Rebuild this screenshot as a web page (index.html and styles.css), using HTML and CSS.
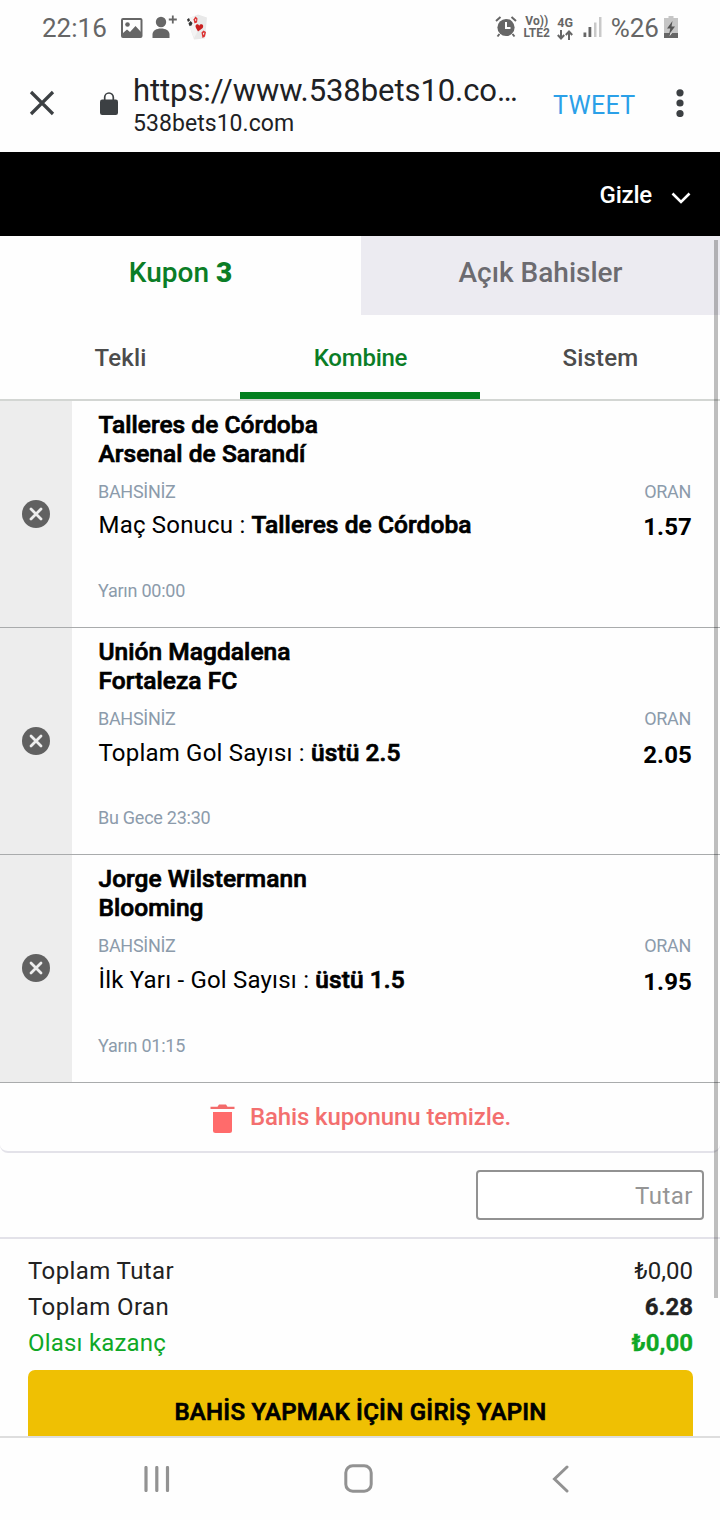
FILE: index.html
```html
<!DOCTYPE html>
<html lang="tr">
  <head>
    <meta charset="UTF-8" />
    <meta name="viewport" content="width=device-width, initial-scale=1.0">
    <title>538bets10.com</title>
    <link rel="stylesheet" href="styles.css">
  </head>
  <body>
    <header class="status-bar">
      <span class="clock">22:16</span>
      <svg class="icon-image" width="22" height="20" viewBox="0 0 22 20">
        <rect x="1" y="1" width="19.5" height="18" rx="1" fill="none" stroke="#666" stroke-width="2" />
        <circle cx="6.5" cy="6.5" r="2.3" fill="#666" />
        <path d="M2 15l4-3.5 3 2.5 5.5-6L20 14v5H2z" fill="#666" />
      </svg>
      <svg class="icon-person" width="26" height="24" viewBox="0 0 26 24">
        <circle cx="9" cy="7" r="5.2" fill="#666" />
        <path d="M0.5 23v-3.500c0-4 4-6 8.500-6s8.500 2 8.500 6V23z" fill="#666" />
        <path d="M20.800 0.500v8M16.800 4.500h8" stroke="#666" stroke-width="1.800" />
      </svg>
      <svg class="icon-cards" width="23" height="26" viewBox="0 0 23 26">
        <path d="M1 5l11-4.500 9 3-2 21-11 1z" fill="#e9e9e9" />
        <path d="M1 5l7-3 5 13-5 9z" fill="#f3f3f3" />
        <path d="M1 5.500l2-1.500 1 2.500-2 1.500z" fill="#333" />
        <path d="M2.500 9.500L4.500 7l2 2-1 2.500-2 .5z" fill="#333" />
        <path d="M7.500 5.500l2-3 2 2-.5 4-2.500 1z" fill="#d33" />
        <path d="M9 5.500l1-.8.3 1.800-.9.500z" fill="#f3f3f3" />
        <path d="M12 17.500l-2-3.500c-1.800-3.500 1.800-5 3.200-2.300 1.600-2.700 5.300-1 3.500 2.300z" fill="#c91f1f" />
        <path d="M15.500 18.500l2-2 2.500 1.500-1 4.500-2.500 1.500z" fill="#d33" />
        <path d="M17 19l1.300-.5-.3 2-1 .3z" fill="#e9e9e9" />
      </svg>
      <div class="status-right">
        <svg class="icon-alarm" width="22" height="22" viewBox="0 0 22 22">
          <circle cx="11" cy="11.500" r="8.600" fill="#666" />
          <path d="M1 5l4.500-4M21 5l-4.500-4M4.500 18l-2 2.500M17.500 18l2 2.500" stroke="#666" stroke-width="2" />
          <path d="M11 6v6h4.500" fill="none" stroke="#fff" stroke-width="2" />
        </svg>
        <span class="network volte"><span>Vo))</span><span>LTE2</span></span>
        <span class="network">4G
          <svg width="16" height="10" viewBox="0 0 16 10">
            <path d="M4 0v8M0.800 5L4 8.500 7.200 5M12 10V2M8.800 5L12 1.500 15.200 5" fill="none" stroke="#666" stroke-width="2" />
          </svg>
        </span>
        <svg class="icon-signal" width="19" height="20" viewBox="0 0 19 20">
          <path d="M0.500 15.500h2.800V20H0.500zM5.500 10h2.800v10H5.500z" fill="#666" />
          <path d="M11 5.500h2.500V20H11zM16 0h2.500v20H16z" fill="#c9c9c9" />
        </svg>
        <span class="battery-level">%26</span>
        <svg class="icon-battery" width="14" height="22" viewBox="0 0 14 22">
          <path d="M4.500 0h5v2H14v20H0V2h4.500z" fill="#c6c6c6" />
          <path d="M0 17h14v5H0z" fill="#666" />
          <path d="M8.500 5L3 12.500h3.300L5 18.500l6-8H7.500z" fill="#555" />
          <path d="M6.500 17h1.500l-2.500 3.300z" fill="#fff" />
        </svg>
      </div>
    </header>

    <div class="browser-bar">
      <svg class="icon-close" width="26" height="26" viewBox="0 0 26 26">
        <path d="M2 2l22 22M24 2L2 24" stroke="#3c4043" stroke-width="3.200" />
      </svg>
      <svg class="icon-lock" width="18" height="23" viewBox="0 0 18 23">
        <rect x="0" y="7.500" width="18" height="15.500" rx="2.200" fill="#3c4043" />
        <path d="M4.700 8V5.300a4.300 4.300 0 0 1 8.600 0V8" fill="none" stroke="#3c4043" stroke-width="1.700" />
      </svg>
      <div class="address">
        <div class="address-url">https://www.538bets10.co…</div>
        <div class="address-host">538bets10.com</div>
      </div>
      <span class="tweet">TWEET</span>
      <svg class="icon-more" width="8" height="28" viewBox="0 0 8 28">
        <g fill="#3c4043">
          <circle cx="4" cy="3.800" r="3.600" />
          <circle cx="4" cy="14" r="3.600" />
          <circle cx="4" cy="24.500" r="3.600" />
        </g>
      </svg>
    </div>

    <main class="betslip">
      <div class="hide-bar">
        <span>Gizle</span>
        <svg width="20" height="12" viewBox="0 0 20 12">
          <path d="M1.500 1.500L10 10l8.500-8.500" fill="none" stroke="#fff" stroke-width="2.600" />
        </svg>
      </div>

      <nav class="tabs">
        <a class="tab active">Kupon <b>3</b></a>
        <a class="tab">Açık Bahisler</a>
      </nav>

      <nav class="bet-types">
        <a class="bet-type">Tekli</a>
        <a class="bet-type active">Kombine</a>
        <a class="bet-type">Sistem</a>
      </nav>

      <section class="bets">
        <article class="bet">
          <div class="bet-remove">
            <svg width="28" height="28" viewBox="0 0 28 28">
              <circle cx="14" cy="14" r="14" fill="#616161" />
              <path d="M9 9l10 10M19 9L9 19" stroke="#eee" stroke-width="2.800" stroke-linecap="round" />
            </svg>
          </div>
          <div class="bet-info">
            <h3 class="teams">Talleres de Córdoba<br>Arsenal de Sarandí</h3>
            <div class="labels"><span>BAHSİNİZ</span><span>ORAN</span></div>
            <div class="pick"><p>Maç Sonucu : <b>Talleres de Córdoba</b></p><strong>1.57</strong></div>
            <div class="bet-time">Yarın 00:00</div>
          </div>
        </article>
        <article class="bet">
          <div class="bet-remove">
            <svg width="28" height="28" viewBox="0 0 28 28">
              <circle cx="14" cy="14" r="14" fill="#616161" />
              <path d="M9 9l10 10M19 9L9 19" stroke="#eee" stroke-width="2.800" stroke-linecap="round" />
            </svg>
          </div>
          <div class="bet-info">
            <h3 class="teams">Unión Magdalena<br>Fortaleza FC</h3>
            <div class="labels"><span>BAHSİNİZ</span><span>ORAN</span></div>
            <div class="pick"><p>Toplam Gol Sayısı : <b>üstü 2.5</b></p><strong>2.05</strong></div>
            <div class="bet-time">Bu Gece 23:30</div>
          </div>
        </article>
        <article class="bet">
          <div class="bet-remove">
            <svg width="28" height="28" viewBox="0 0 28 28">
              <circle cx="14" cy="14" r="14" fill="#616161" />
              <path d="M9 9l10 10M19 9L9 19" stroke="#eee" stroke-width="2.800" stroke-linecap="round" />
            </svg>
          </div>
          <div class="bet-info">
            <h3 class="teams">Jorge Wilstermann<br>Blooming</h3>
            <div class="labels"><span>BAHSİNİZ</span><span>ORAN</span></div>
            <div class="pick"><p>İlk Yarı - Gol Sayısı : <b>üstü 1.5</b></p><strong>1.95</strong></div>
            <div class="bet-time">Yarın 01:15</div>
          </div>
        </article>
      </section>

      <div class="clear-slip">
        <svg width="25" height="29" viewBox="0 0 25 29">
          <path d="M0.500 2.700h7L9 0.600h7l1.500 2.100h7v2.300h-24z" fill="#f36b6b" />
          <path d="M3 8h19v18.500a2.500 2.500 0 0 1-2.500 2.500h-14A2.500 2.500 0 0 1 3 26.500z" fill="#ff6b6b" />
        </svg>
        <span>Bahis kuponunu temizle.</span>
      </div>

      <div class="stake">
        <input class="stake-input" type="text" placeholder="Tutar">
      </div>

      <div class="totals">
        <div class="total"><span>Toplam Tutar</span><span class="amount">₺0,00</span></div>
        <div class="total"><span>Toplam Oran</span><b>6.28</b></div>
        <div class="total winnings"><span>Olası kazanç</span><b class="amount">₺0,00</b></div>
        <button class="login-button">BAHİS YAPMAK İÇİN GİRİŞ YAPIN</button>
      </div>

      <div class="scrollbar"></div>
    </main>

    <footer class="nav-bar">
      <svg class="nav-recents" width="26" height="26" viewBox="0 0 26 26">
        <path d="M2 1.500v23M12.800 1.500v23M23.500 1.500v23" stroke="#929292" stroke-width="3.200" stroke-linecap="round" />
      </svg>
      <svg class="nav-home" width="29" height="29" viewBox="0 0 29 29">
        <rect x="1.800" y="1.800" width="25.400" height="25.400" rx="7" fill="none" stroke="#929292" stroke-width="3" />
      </svg>
      <svg class="nav-back" width="17" height="28" viewBox="0 0 17 28">
        <path d="M15 2L2.500 14 15 26" fill="none" stroke="#929292" stroke-width="3" stroke-linecap="round" />
      </svg>
    </footer>
  </body>
</html>
```
FILE: styles.css
```css
* {
  box-sizing: border-box;
}

body {
  width: 720px;
  height: 1520px;
  margin: 0;
  overflow: hidden;
  display: flex;
  flex-direction: column;
  font-family: Roboto, 'Noto Sans', sans-serif;
  font-size: 24px;
  color: #000;
  background: #fefefe;
}

svg {
  display: block;
  flex: none;
}

/* Phone status bar */
.status-bar {
  display: flex;
  align-items: center;
  height: 56px;
  padding: 0 41px 0 42px;
  color: #666;
}

.clock {
  width: 79px;
  font-size: 26px;
}

.icon-person {
  margin: -3px 0 0 9px;
}

.icon-cards {
  margin: -2px 0 0 8px;
}

.status-right {
  display: flex;
  align-items: center;
  margin-left: auto;
}

.icon-alarm {
  margin-top: -3px;
}

.network {
  width: 17px;
  margin-left: 6px;
  font-size: 12.500px;
  line-height: 12px;
  font-weight: 700;
  text-align: center;
  white-space: nowrap;
}

.network svg {
  margin-top: 1px;
}

.volte {
  display: flex;
  flex-direction: column;
  align-items: center;
  width: 28px;
  margin: -2px 0 0 6px;
  font-size: 12px;
}

.icon-signal {
  margin: -2px 0 0 9px;
}

.battery-level {
  margin-left: 9px;
  font-size: 26px;
}

.icon-battery {
  margin: -3px 1px 0 5px;
}

/* Browser toolbar */
.browser-bar {
  display: flex;
  height: 96px;
  padding: 0 36px 0 29px;
}

.icon-close {
  margin-top: 34px;
}

.icon-lock {
  margin: 36px 0 0 45px;
}

.address {
  width: 435px;
  padding: 16px 0 0 15px;
  color: #202124;
  white-space: nowrap;
}

.address-url {
  font-size: 31px;
  line-height: 38px;
  letter-spacing: -0.080px;
}

.address-host {
  font-size: 23px;
  line-height: 28px;
  letter-spacing: 0.050px;
}

.tweet {
  width: 123px;
  margin-top: 35px;
  font-size: 25px;
  line-height: 30px;
  letter-spacing: 0.350px;
  color: #2ba0e8;
}

.icon-more {
  margin-top: 33px;
}

/* Betslip */
.betslip {
  position: relative;
  height: 1284px;
  overflow: hidden;
}

.hide-bar {
  display: flex;
  align-items: center;
  justify-content: flex-end;
  gap: 19px;
  height: 84px;
  padding: 2px 29px 0 0;
  font-weight: 500;
  letter-spacing: -0.200px;
  color: #fff;
  background: #000;
}

.hide-bar svg {
  margin-top: 6px;
}

.tabs {
  display: flex;
  height: 79px;
  font-size: 28px;
  font-weight: 500;
  line-height: 73px;
  text-align: center;
}

.tab {
  width: 359px;
  color: #6c6b70;
  background: #ecebf1;
}

.tab.active {
  width: 361px;
  color: #0b7d26;
  background: none;
}

.tab b {
  font-weight: 900;
}

.bet-types {
  display: flex;
  height: 85.670px;
  border-bottom: 2px solid #d3d6d3;
  font-weight: 500;
  line-height: 87px;
  text-align: center;
}

.bet-type {
  width: 240px;
  padding-left: 1px;
  letter-spacing: 0.200px;
  color: #4c4c4c;
}

.bet-type.active {
  border-bottom: 7px solid #048020;
  letter-spacing: -0.250px;
  color: #0b7d26;
}

.bet {
  display: flex;
  height: 227.330px;
  border-bottom: 1px solid #a9abac;
}

.bet-remove {
  display: flex;
  align-items: center;
  justify-content: center;
  width: 72px;
  background: #ededed;
}

.bet-info {
  flex: 1;
  padding: 9px 28px 0 26px;
}

.teams {
  margin: 0;
  padding-left: 0.500px;
  font-size: 24.500px;
  font-weight: 500;
  line-height: 29px;
  letter-spacing: 0.050px;
}

/* thickened medium, tighter than the real bold */
.teams,
.pick b,
.login-button {
  -webkit-text-stroke: 0.700px #000;
}

.labels {
  display: flex;
  justify-content: space-between;
  margin: 13px 1px 0 0;
  font-size: 18px;
  line-height: 22px;
  letter-spacing: -0.300px;
  color: #8c9bab;
}

.pick {
  display: flex;
  justify-content: space-between;
  margin-top: 8.700px;
  line-height: 29px;
}

.pick p {
  margin: 0;
  padding-left: 0.500px;
  letter-spacing: 0.200px;
}

.pick b {
  font-size: 24.500px;
  font-weight: 500;
  line-height: 1;
  letter-spacing: 0.080px;
}

.pick strong {
  padding-top: 2px;
  letter-spacing: 0.150px;
}

.bet-time {
  margin-top: 37.700px;
  font-size: 18px;
  line-height: 22px;
  letter-spacing: -0.250px;
  color: #8c9bab;
}

.clear-slip {
  display: flex;
  align-items: center;
  justify-content: center;
  gap: 15px;
  height: 70px;
  padding-left: 1px;
  border-bottom: 2px solid #e3e2e9;
  border-radius: 0 0 8px 8px;
  font-weight: 500;
  letter-spacing: -0.120px;
  color: #f36f6f;
}

.clear-slip svg {
  margin-top: 3px;
}

.stake {
  display: flex;
  justify-content: flex-end;
  height: 86px;
  padding: 17px 16px 0;
  border-bottom: 2px solid #e3e2e9;
}

.stake-input {
  width: 228px;
  height: 50px;
  padding: 2px 9px 0;
  border: 2px solid #929292;
  border-radius: 4px;
  font: 24px Roboto, sans-serif;
  letter-spacing: 0.500px;
  text-align: right;
  background: #fff;
}

.stake-input::placeholder {
  color: #959595;
}

.totals {
  padding: 14px 27px 0 28px;
  color: #222;
}

.total {
  display: flex;
  justify-content: space-between;
  line-height: 36px;
}

.total span:first-child {
  letter-spacing: 0.400px;
}

.total.winnings {
  color: #0fa826;
}

.total.winnings span:first-child {
  letter-spacing: 0.200px;
}

.total b {
  -webkit-text-stroke: 0.300px currentColor;
}

.login-button {
  display: block;
  width: 100%;
  height: 84px;
  margin-top: 9px;
  padding: 0;
  border: none;
  border-radius: 7px;
  font: 500 24px Roboto, sans-serif;
  letter-spacing: 0.270px;
  color: #000;
  background: #efc003;
}

/* Overlay scrollbar */
.scrollbar {
  position: absolute;
  top: 88px;
  right: 2px;
  width: 4px;
  height: 1058px;
  background: rgba(0, 0, 0, 0.250);
}

/* Phone navigation bar */
.nav-bar {
  display: flex;
  align-items: center;
  height: 84px;
  padding-bottom: 1px;
  border-top: 2px solid #dedede;
}

.nav-recents {
  margin-left: 144px;
}

.nav-home {
  margin-left: 174px;
}

.nav-back {
  margin-left: 179px;
}
```
